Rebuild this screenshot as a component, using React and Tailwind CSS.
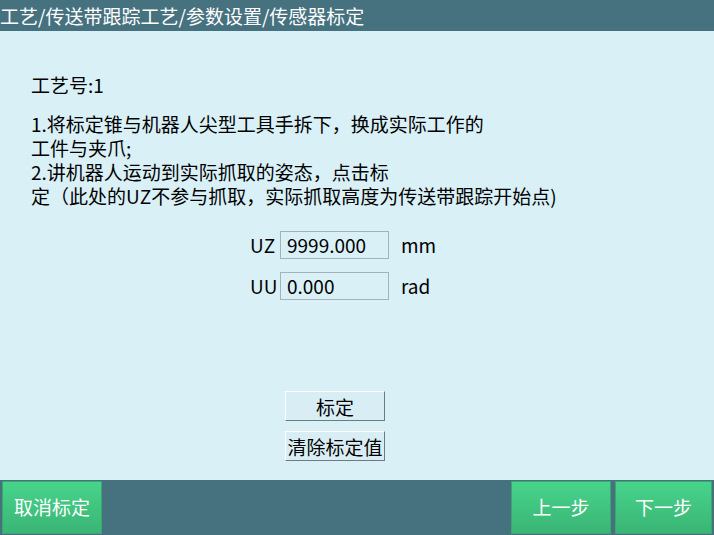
export default function App() {
  const font = { fontFamily: '"Microsoft YaHei", "Noto Sans CJK SC", "Noto Sans", sans-serif' };

  return (
    <div className="w-[714px] h-[535px] flex flex-col bg-[#d9f0f7] overflow-hidden" style={font}>
      {/* 标题栏 */}
      <div className="h-[31px] bg-[#46717f] text-white text-[19px] leading-[31px] whitespace-nowrap">
        工艺/传送带跟踪工艺/参数设置/传感器标定
      </div>

      {/* 内容 */}
      <div className="flex-1 flex flex-col text-[19px] text-black">
        <div className="pl-[31px] pt-[42px] leading-[24px]">工艺号:1</div>
        <div className="pl-[31px] pt-[15px] leading-[24px] whitespace-nowrap">
          1.将标定锥与机器人尖型工具手拆下，换成实际工作的<br />
          工件与夹爪;<br />
          2.讲机器人运动到实际抓取的姿态，点击标<br />
          定（此处的UZ不参与抓取，实际抓取高度为传送带跟踪开始点)
        </div>

        <div className="flex flex-col gap-[13px] pl-[250px] pt-[23px]">
          <div className="flex items-center h-[28px]">
            <span className="w-[30px]">UZ</span>
            <div className="w-[109px] h-[28px] border border-[#a6b3b6] pl-[6px] leading-[26px]">9999.000</div>
            <span className="ml-[12px]">mm</span>
          </div>
          <div className="flex items-center h-[28px]">
            <span className="w-[30px]">UU</span>
            <div className="w-[109px] h-[28px] border border-[#a6b3b6] pl-[6px] leading-[26px]">0.000</div>
            <span className="ml-[12px]">rad</span>
          </div>
        </div>

        <div className="flex flex-col gap-[10px] pl-[285px] pt-[91px]">
          <button className="w-[100px] h-[30px] bg-[#d9eef4] border border-t-white border-l-white border-b-[#6b7b80] border-r-[#6b7b80] text-[19px] leading-none">
            标定
          </button>
          <button className="w-[100px] h-[30px] bg-[#d9eef4] border border-t-white border-l-white border-b-[#6b7b80] border-r-[#6b7b80] text-[19px] leading-none whitespace-nowrap">
            清除标定值
          </button>
        </div>
      </div>

      {/* 底栏 */}
      <div className="h-[55px] bg-[#46717f] flex items-stretch px-[2px] py-[1px] gap-[4px]">
        <button className="w-[100px] bg-gradient-to-b from-[#47d48b] to-[#3ab575] border border-[#3aa86d] text-white text-[19px]">
          取消标定
        </button>
        <div className="flex-1" />
        <button className="w-[100px] bg-gradient-to-b from-[#47d48b] to-[#3ab575] border border-[#3aa86d] text-white text-[19px]">
          上一步
        </button>
        <button className="w-[97px] bg-gradient-to-b from-[#47d48b] to-[#3ab575] border border-[#3aa86d] text-white text-[19px]">
          下一步
        </button>
      </div>
    </div>
  );
}
